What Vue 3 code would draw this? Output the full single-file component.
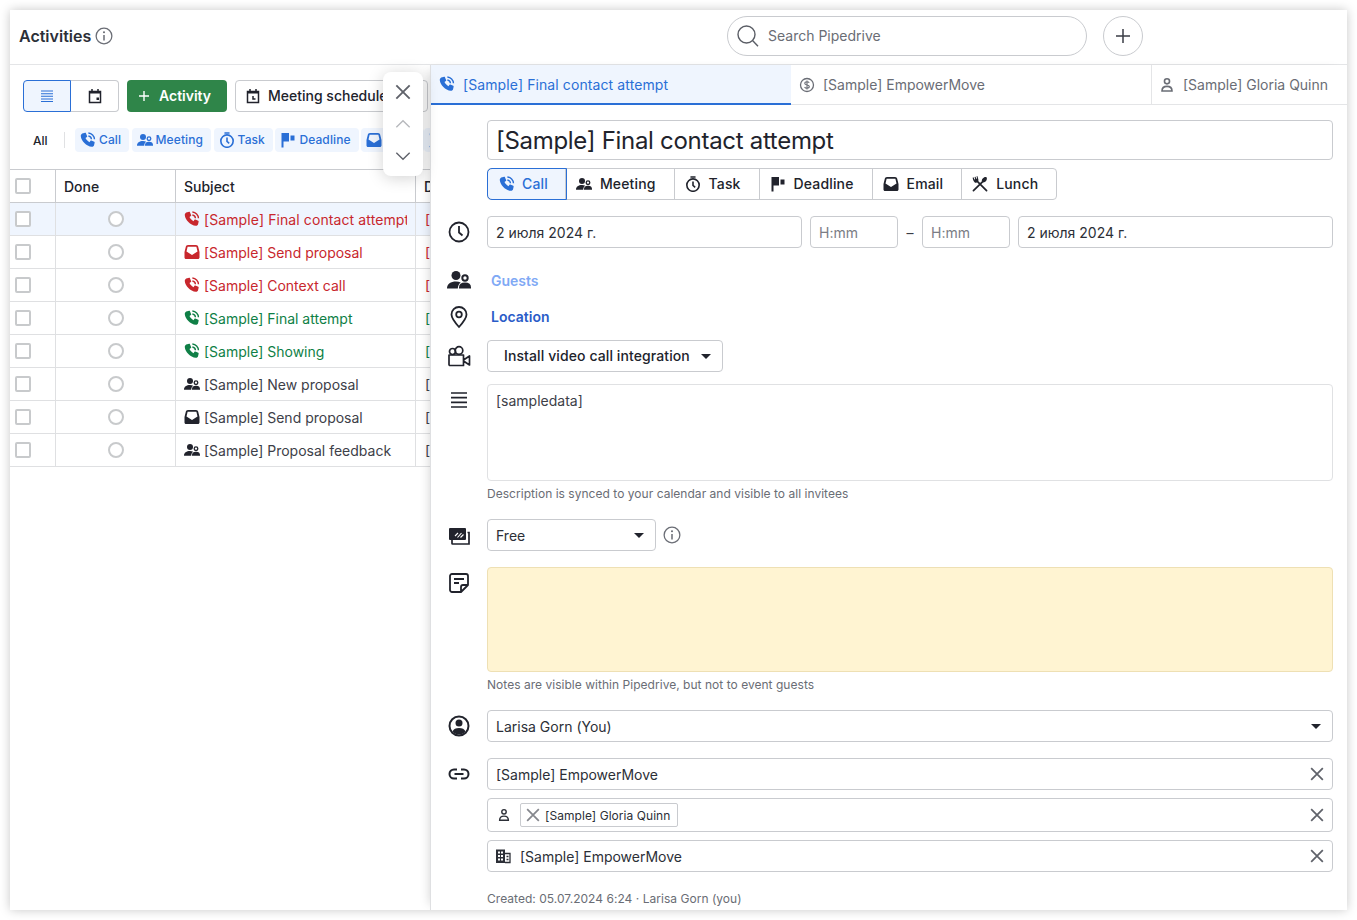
<script setup>
const rows = [
  { title: '[Sample] Final contact attempt', icon: 'i-call', tone: 'red', active: true },
  { title: '[Sample] Send proposal', icon: 'i-mail', tone: 'red' },
  { title: '[Sample] Context call', icon: 'i-call', tone: 'red' },
  { title: '[Sample] Final attempt', icon: 'i-call', tone: 'green' },
  { title: '[Sample] Showing', icon: 'i-call', tone: 'green' },
  { title: '[Sample] New proposal', icon: 'i-meet', tone: 'dark' },
  { title: '[Sample] Send proposal', icon: 'i-mail', tone: 'dark' },
  { title: '[Sample] Proposal feedback', icon: 'i-meet', tone: 'dark' },
];

const chips = [
  { label: 'Call', icon: 'i-call' },
  { label: 'Meeting', icon: 'i-meet' },
  { label: 'Task', icon: 'i-task' },
  { label: 'Deadline', icon: 'i-flag' },
  { label: 'Email', icon: 'i-mail' },
  { label: 'Lunch', icon: 'i-lunch' },
];
</script>

<template>
  <div class="page">
    <svg class="defs" width="0" height="0">
      <symbol id="i-call" viewBox="2 1.500 21 21">
        <path fill="currentColor" d="M6.200 3.200 8.700 2.600c.5-.1.900.1 1.100.6l1.600 3.800c.2.400.1.800-.3 1.100L9.200 9.400c1 2.100 2.900 4.200 5.200 5.400l1.400-1.800c.3-.4.700-.5 1.100-.3l3.800 1.700c.4.200.6.600.5 1.100l-.6 2.700c-.3 1.700-1.500 2.800-3.100 2.800C10.300 20.300 3.600 13.500 3 6.800 3 5 4.300 3.600 6.200 3.200Z"/>
        <path fill="none" stroke="currentColor" stroke-width="1.800" d="M13 2.800a8.600 8.600 0 0 1 8 8.200M13 6.800a4.600 4.600 0 0 1 4 4.200"/>
      </symbol>
      <symbol id="i-meet" viewBox="0 0 24 24">
        <circle cx="9" cy="7.500" r="4.500" fill="currentColor"/>
        <path fill="currentColor" d="M0 20.500c0-4.500 3.800-7 9-7 1.800 0 3.400.3 4.700 1-1.700 1.200-2.700 3.200-2.900 6Z"/>
        <circle cx="18" cy="10" r="2.700" fill="none" stroke="currentColor" stroke-width="2"/>
        <path fill="currentColor" stroke="currentColor" stroke-width="2" d="M13 19.500c0-2.600 2.200-4 5-4s5 1.400 5 4Z"/>
      </symbol>
      <symbol id="i-task" viewBox="1 1 22 22">
        <circle cx="12" cy="13.500" r="8.500" fill="none" stroke="currentColor" stroke-width="2.200"/>
        <path fill="none" stroke="currentColor" stroke-width="2.200" d="M8.500 2.300h7M12 8.500v5.500l3 2.500"/>
      </symbol>
      <symbol id="i-flag" viewBox="0 0 16 16">
        <path fill="currentColor" d="M1.500 1h7.500v8.500H3.500V15.500h-2Z"/>
        <rect x="10.500" y="3.500" width="4" height="5" fill="currentColor"/>
      </symbol>
      <symbol id="i-mail" viewBox="0 0 16 16">
        <path fill="currentColor" d="M4 1h8c1.200 0 2 .8 2.200 1.800L15.500 8v5.500c0 .9-.7 1.500-1.500 1.500H2c-.9 0-1.500-.6-1.500-1.500V8L1.800 2.800C2 1.800 2.800 1 4 1Zm0 1.800c-.2 0-.4.100-.5.400L2.500 7.500 8 11l5.500-3.500-1-4.300c-.1-.3-.3-.4-.5-.4Z"/>
      </symbol>
      <symbol id="i-lunch" viewBox="1 1 22 22">
        <path fill="none" stroke="currentColor" stroke-width="2.400" stroke-linecap="round" d="M3 21 15 9.500M21 21 8 8"/>
        <path fill="currentColor" d="M15 9.500c-1.500-3 .5-5.500 2.500-6.500 2-1 4-.5 4 1.500 0 3-3 6.500-6.500 5ZM2 3h1.500l.8 3 1-.8-.8-2.700 1.400-.5.900 2.800 1.200-.5-.8-2.800h1.400l1.200 4.500c.2 1.300-.3 2.300-1.300 3.200l-1 .8c-1 .6-2.200.4-3-.5C2.500 7.500 2 5 2 3Z"/>
      </symbol>
      <symbol id="i-x" viewBox="0 0 24 24">
        <path fill="none" stroke="currentColor" stroke-width="3" d="M2 2l20 20M22 2 2 22"/>
      </symbol>
      <symbol id="i-info" viewBox="0 0 24 24">
        <circle cx="12" cy="12" r="10.500" fill="none" stroke="currentColor" stroke-width="1.700"/>
        <path fill="none" stroke="currentColor" stroke-width="2" d="M12 10.500v7.500"/>
        <circle cx="12" cy="7" r="1.400" fill="currentColor"/>
      </symbol>
      <symbol id="i-person" viewBox="0 0 24 24">
        <circle cx="12" cy="6.500" r="3.800" fill="none" stroke="currentColor" stroke-width="2.400"/>
        <path fill="none" stroke="currentColor" stroke-width="2.400" d="M4.500 21c0-4.500 3-7 7.500-7s7.500 2.500 7.500 7Z"/>
      </symbol>
    </svg>

    <div class="shell">
      <header class="topbar">
        <div class="page-title">
          Activities
          <svg class="ico-18 grey"><use href="#i-info" /></svg>
        </div>
        <div class="search">
          <svg class="ico-24 search-ico" viewBox="0 0 24 24">
            <circle cx="10.500" cy="10.500" r="8.500" fill="none" stroke="currentColor" stroke-width="1.400" />
            <path fill="none" stroke="currentColor" stroke-width="1.400" d="m16.800 16.800 5.200 5.500" />
          </svg>
          <span class="lbl">Search Pipedrive</span>
        </div>
        <button class="add-btn">
          <svg class="ico-16" viewBox="0 0 16 16"><path fill="none" stroke="currentColor" stroke-width="1.500" d="M8 1v14M1 8h14" /></svg>
        </button>
      </header>

      <div class="body">
        <section class="list">
          <div class="toolbar">
            <div class="toggle">
              <button class="tog on">
                <svg class="ico-16" viewBox="0 0 16 16"><path fill="none" stroke="currentColor" stroke-width="1.100" d="M2 3h12M2 5.700h12M2 8.300h12M2 11h12M2 13.500h12" /></svg>
              </button>
              <button class="tog">
                <svg class="ico-16" viewBox="0 0 16 16">
                  <path fill="none" stroke="currentColor" stroke-width="1.500" d="M2.500 3.500h11v11h-11ZM5 1v3M11 1v3" />
                  <path fill="currentColor" d="M2.500 3.500h11v2h-11ZM9.500 9.500h2.500v2.500H9.500Z" />
                </svg>
              </button>
            </div>
            <button class="add-activity">
              <svg class="ico-12" viewBox="0 0 12 12"><path fill="none" stroke="currentColor" stroke-width="1.400" d="M6 1v10M1 6h10" /></svg>
              <span class="lbl">Activity</span>
            </button>
            <button class="scheduler">
              <svg class="ico-16" viewBox="0 0 16 16">
                <path fill="none" stroke="currentColor" stroke-width="1.500" d="M2.500 3.500h11v11h-11ZM5 1v3M11 1v3M8 8v3h2.500" />
                <path fill="currentColor" d="M2.500 3.500h11v2h-11Z" />
              </svg>
              <span class="lbl">Meeting scheduler</span>
            </button>
          </div>

          <div class="filters">
            <span class="all">All</span>
            <span class="sep"></span>
            <span v-for="c in chips" :key="c.label" class="chip">
              <svg class="ico-16"><use :href="'#' + c.icon" /></svg>
              <span class="lbl-s">{{ c.label }}</span>
            </span>
          </div>

          <div class="row head">
            <div class="cell c-check"><span class="check"></span></div>
            <div class="cell c-done">Done</div>
            <div class="cell c-subject">Subject</div>
            <div class="cell c-rest">Deal</div>
          </div>
          <div v-for="(r, i) in rows" :key="i" class="row" :class="[r.tone, { active: r.active }]">
            <div class="cell c-check"><span class="check"></span></div>
            <div class="cell c-done center"><span class="radio"></span></div>
            <div class="cell c-subject">
              <svg class="ico-16 row-ico"><use :href="'#' + r.icon" /></svg>
              <span class="subject-text">{{ r.title }}</span>
            </div>
            <div class="cell c-rest">[Sample]</div>
          </div>
        </section>

        <section class="detail">
          <nav class="tabs">
            <div class="tab tab-1 current">
              <svg class="ico-16"><use href="#i-call" /></svg>
              [Sample] Final contact attempt
            </div>
            <div class="tab tab-2">
              <svg class="ico-16" viewBox="0 0 16 16">
                <circle cx="8" cy="8" r="6.500" fill="none" stroke="currentColor" stroke-width="1.300" />
                <path fill="none" stroke="currentColor" stroke-width="1.100" d="M10.200 5.800C9.800 5 9 4.700 8 4.700c-1.200 0-2.200.6-2.200 1.700 0 2.300 4.500 1 4.500 3.200 0 1.100-1 1.700-2.300 1.700-1.100 0-2-.4-2.400-1.200M8 3.500v9" />
              </svg>
              [Sample] EmpowerMove
            </div>
            <div class="tab tab-3">
              <svg class="ico-16"><use href="#i-person" /></svg>
              [Sample] Gloria Quinn
            </div>
          </nav>

          <form class="form" @submit.prevent>
            <div class="line">
              <div class="field title-field">[Sample] Final contact attempt</div>
            </div>

            <div class="line types-line">
              <div class="types">
                <button v-for="(c, i) in chips" :key="c.label" class="type" :class="{ picked: i === 0 }">
                  <svg class="ico-16"><use :href="'#' + c.icon" /></svg>
                  <span class="lbl">{{ c.label }}</span>
                </button>
              </div>
            </div>

            <div class="line dates">
              <svg class="side ico-24" viewBox="0 0 24 24">
                <circle cx="12" cy="12" r="9.500" fill="none" stroke="currentColor" stroke-width="1.800" />
                <path fill="none" stroke="currentColor" stroke-width="1.800" d="M12 6v6.500l3.500 3" />
              </svg>
              <div class="field grow">2 июля 2024 г.</div>
              <div class="field time">H:mm</div>
              <span class="dash">–</span>
              <div class="field time">H:mm</div>
              <div class="field grow">2 июля 2024 г.</div>
            </div>

            <div class="line link-line guests">
              <svg class="side ico-24"><use href="#i-meet" /></svg>
              <a class="pale">Guests</a>
            </div>

            <div class="line link-line location">
              <svg class="side ico-24" viewBox="0 0 24 24">
                <path fill="none" stroke="currentColor" stroke-width="1.800" d="M12 22C7.500 17 4.500 13.500 4.500 9.500a7.500 7.500 0 0 1 15 0C19.500 13.500 16.500 17 12 22Z" />
                <circle cx="12" cy="9.500" r="2.800" fill="none" stroke="currentColor" stroke-width="1.800" />
              </svg>
              <a>Location</a>
            </div>

            <div class="line video">
              <svg class="side ico-24" viewBox="0 0 24 24">
                <circle cx="5.500" cy="7.500" r="3" fill="none" stroke="currentColor" stroke-width="1.700" />
                <circle cx="12" cy="6.500" r="3.800" fill="none" stroke="currentColor" stroke-width="1.700" />
                <path fill="none" stroke="currentColor" stroke-width="1.700" stroke-linejoin="round" d="M2 11h14.500v10.500H3a1 1 0 0 1-1-1ZM16.500 16l6-4v9l-6-4" />
              </svg>
              <button class="video-btn">
                <span class="lbl">Install video call integration</span>
                <span class="caret"></span>
              </button>
            </div>

            <div class="line desc">
              <svg class="side ico-24" viewBox="0 0 24 24"><path fill="none" stroke="currentColor" stroke-width="1.700" d="M4 5h16M4 9.700h16M4 14.300h16M4 19h16" /></svg>
              <div class="area">[sampledata]</div>
            </div>
            <p class="hint hint-desc">Description is synced to your calendar and visible to all invitees</p>

            <div class="line busy">
              <svg class="side ico-24" viewBox="0 0 24 24">
                <path fill="none" stroke="currentColor" stroke-width="1.700" d="M5 9v11.500a.5.500 0 0 0 .5.500H22V9.500h-1.500" />
                <rect x="2" y="5" width="17" height="12" rx="1" fill="currentColor" />
                <path fill="none" stroke="#fff" stroke-width="1.100" d="m8 13 3-3M10.500 14.500l4-4.500M13.500 14.500l3-3" />
              </svg>
              <div class="field select free">Free<span class="caret"></span></div>
              <svg class="ico-18 grey free-info"><use href="#i-info" /></svg>
            </div>

            <div class="line note">
              <svg class="side ico-24" viewBox="0 0 24 24">
                <path fill="none" stroke="currentColor" stroke-width="1.800" stroke-linejoin="round" d="M14 21H5a2 2 0 0 1-2-2V5a2 2 0 0 1 2-2h14a2 2 0 0 1 2 2v9Zm0 0v-5a2 2 0 0 1 2-2h5M7 8h10M7 12h5" />
              </svg>
              <div class="note-box"></div>
            </div>
            <p class="hint hint-note">Notes are visible within Pipedrive, but not to event guests</p>

            <div class="line owner">
              <svg class="side ico-24" viewBox="0 0 24 24">
                <circle cx="12" cy="12" r="9.500" fill="none" stroke="currentColor" stroke-width="2" />
                <circle cx="12" cy="9" r="3.500" fill="currentColor" />
                <path fill="currentColor" d="M5.500 17.500c.8-2.500 3.500-3.500 6.500-3.500s5.700 1 6.500 3.500c-1.500 2-4 3-6.500 3s-5-1-6.500-3Z" />
              </svg>
              <div class="field select">Larisa Gorn (You)<span class="caret"></span></div>
            </div>

            <div class="line linked">
              <svg class="side ico-24" viewBox="0 0 24 24">
                <path fill="none" stroke="currentColor" stroke-width="2" d="M10 7.500H7a4.500 4.500 0 0 0 0 9h3M14 7.500h3a4.500 4.500 0 0 1 0 9h-3M7.500 12h9" />
              </svg>
              <div class="field clearable">
                [Sample] EmpowerMove
                <svg class="ico-14 clear"><use href="#i-x" /></svg>
              </div>
            </div>
            <div class="line linked-person">
              <div class="field clearable person">
                <svg class="ico-14"><use href="#i-person" /></svg>
                <span class="tag">
                  <svg class="ico-14"><use href="#i-x" /></svg>
                  [Sample] Gloria Quinn
                </span>
                <svg class="ico-14 clear"><use href="#i-x" /></svg>
              </div>
            </div>
            <div class="line linked-org">
              <div class="field clearable org">
                <svg class="ico-16" viewBox="0 0 16 16">
                  <path fill="currentColor" fill-rule="evenodd" d="M1 1.500h9V15H1Zm2 2v2h2v-2Zm3 0v2h2v-2Zm-3 3.500v2h2V7Zm3 0v2h2V7Zm-3 3.500v2h2v-2Zm3 0v2h2v-2Z" />
                  <path fill="none" stroke="currentColor" stroke-width="1.300" d="M10 5.500h5v9h-5M11.500 8.500h2M11.500 11.500h2" />
                </svg>
                [Sample] EmpowerMove
                <svg class="ico-14 clear"><use href="#i-x" /></svg>
              </div>
            </div>

            <p class="hint created">Created: 05.07.2024 6:24 · Larisa Gorn (you)</p>
          </form>
        </section>
      </div>

      <aside class="pager">
        <svg class="pager-x" viewBox="0 0 24 24"><path fill="none" stroke="currentColor" stroke-width="2.200" d="M4 4l16 16M20 4 4 20" /></svg>
        <svg class="pager-up" viewBox="0 0 24 24"><path fill="none" stroke="currentColor" stroke-width="1.600" d="m4 16 8-8 8 8" /></svg>
        <svg class="pager-down" viewBox="0 0 24 24"><path fill="none" stroke="currentColor" stroke-width="1.600" d="m4 8 8 8 8-8" /></svg>
      </aside>
    </div>
  </div>
</template>

<style scoped>
.page {
  width: 1357px;
  height: 920px;
  padding: 10px;
  box-sizing: border-box;
  overflow: hidden;
  background: #fff;
  font-family: Inter, "Noto Sans", sans-serif;
  font-size: 14px;
  color: #21232c;
}
.defs { position: absolute; }
button { font-family: inherit; background: #fff; cursor: pointer; padding: 0; }
svg { flex: none; display: block; }
.ico-12 { width: 12px; height: 12px; }
.ico-14 { width: 14px; height: 14px; }
.ico-16 { width: 16px; height: 16px; }
.ico-18 { width: 18px; height: 18px; }
.ico-24 { width: 24px; height: 24px; }
.grey { color: #6a6d75; }
.lbl { margin-bottom: 2px; }
.lbl-s { margin-bottom: 2px; letter-spacing: 0.1px; }

.shell {
  position: relative;
  width: 1337px;
  height: 900px;
  display: flex;
  flex-direction: column;
  background: #fff;
  box-shadow: 0 0 10px rgba(0, 0, 0, 0.22);
  overflow: hidden;
}

.topbar {
  height: 55px;
  flex: none;
  display: flex;
  align-items: center;
  padding-bottom: 2px;
  border-bottom: 1px solid #e4e5e7;
  box-sizing: border-box;
}
.page-title {
  width: 717px;
  padding-left: 9px;
  box-sizing: border-box;
  display: flex;
  align-items: center;
  gap: 4px;
  font-size: 16px;
  font-weight: 600;
  color: #2c2f37;
}
.search {
  width: 360px;
  height: 40px;
  box-sizing: border-box;
  border: 1px solid #c9cbcf;
  border-radius: 20px;
  display: flex;
  align-items: center;
  gap: 8px;
  padding-left: 8px;
  color: #6a6d75;
}
.search-ico { color: #5a5d65; }
.add-btn {
  margin-left: 16px;
  width: 40px;
  height: 40px;
  border: 1px solid #c9cbcf;
  border-radius: 50%;
  display: flex;
  align-items: center;
  justify-content: center;
  color: #3a3d45;
}

.body { flex: 1; display: flex; min-height: 0; }

.list {
  width: 420px;
  flex: none;
  overflow: hidden;
}
.toolbar {
  display: flex;
  gap: 8px;
  padding: 15px 0 0 13px;
  width: 500px;
}
.toggle { display: flex; }
.tog {
  width: 48px;
  height: 32px;
  border: 1px solid #c9cbcf;
  border-left: 0;
  border-radius: 0 4px 4px 0;
  display: flex;
  align-items: center;
  justify-content: center;
  color: #21232c;
}
.tog.on {
  border: 1px solid #2a6fd6;
  border-radius: 4px 0 0 4px;
  background: #eff5fe;
  color: #2a6fd6;
}
.add-activity {
  width: 100px;
  height: 32px;
  border: 0;
  border-radius: 4px;
  background: #2f8549;
  color: #fff;
  font-size: 14px;
  font-weight: 600;
  display: flex;
  align-items: center;
  gap: 9px;
  padding-left: 11px;
}
.scheduler {
  width: 193px;
  height: 32px;
  box-sizing: border-box;
  border: 1px solid #c9cbcf;
  border-radius: 4px;
  font-size: 14px;
  font-weight: 500;
  color: #21232c;
  display: flex;
  align-items: center;
  gap: 7px;
  padding-left: 9px;
  white-space: nowrap;
  overflow: hidden;
}

.filters {
  display: flex;
  align-items: center;
  height: 24px;
  margin-top: 16px;
  margin-bottom: 17px;
  padding-left: 23px;
  white-space: nowrap;
  width: 500px;
}
.all { font-size: 12px; font-weight: 500; width: 31px; flex: none; }
.sep { width: 1px; height: 16px; background: #e0e1e3; margin-right: 10px; flex: none; }
.chip {
  height: 24px;
  display: flex;
  align-items: center;
  gap: 3px;
  padding: 0 8px 0 5px;
  margin-right: 2.5px;
  border-radius: 4px;
  background: #eff5fe;
  color: #2a6fd6;
  font-size: 12px;
  font-weight: 500;
  flex: none;
}
.chip:last-child { margin-left: -3px; }

.row {
  display: flex;
  height: 33px;
  box-sizing: border-box;
  border-bottom: 1px solid #dfe0e2;
  width: 500px;
  white-space: nowrap;
}
.row.head {
  border-top: 1px solid #c9cbcf;
  border-bottom: 1px solid #c9cbcf;
  font-weight: 500;
  color: #21232c;
  height: 34px;
}
.cell {
  display: flex;
  align-items: center;
  border-right: 1px solid #dfe0e2;
  box-sizing: border-box;
  overflow: hidden;
}
.row.head .cell { border-right-color: #c9cbcf; }
.c-check { width: 46px; padding-left: 5px; }
.c-done { width: 120px; padding-left: 8px; }
.c-done.center { justify-content: center; padding: 0; }
.c-subject { width: 240px; padding-left: 8px; gap: 4px; }
.c-rest { flex: 1; padding-left: 9px; border-right: 0; }
.row.head .c-rest { padding-left: 8px; }
.subject-text { overflow: hidden; width: 203px; flex: none; }
.row.active .subject-text { letter-spacing: 0.1px; }
.check {
  width: 16px;
  height: 16px;
  box-sizing: border-box;
  border: 2px solid #c8cacc;
  border-radius: 2px;
  background: #fff;
}
.radio {
  width: 16px;
  height: 16px;
  box-sizing: border-box;
  border: 2px solid #c8cacc;
  border-radius: 50%;
  background: #fff;
}
.row.active { background: #eff5fe; }
.row.red { color: #c8272d; }
.row.green { color: #0f7f46; }
.row.dark { color: #3d4048; }
.row.dark .row-ico { color: #21232c; }

.detail {
  flex: 1;
  min-width: 0;
  position: relative;
  z-index: 1;
  background: #fff;
  border-left: 1px solid #dfe0e2;
  box-shadow: -6px 0 10px -6px rgba(0, 0, 0, 0.18);
}
.tabs {
  display: flex;
  height: 40px;
  border-bottom: 1px solid #e4e5e7;
  box-sizing: border-box;
  color: #6a6d75;
}
.tab {
  display: flex;
  align-items: center;
  gap: 8px;
  padding-left: 8px;
  box-sizing: border-box;
  border-right: 1px solid #e4e5e7;
}
.tab-1 { width: 360px; letter-spacing: 0.1px; }
.tab-2 { width: 361px; }
.tab-3 { flex: 1; border-right: 0; padding-left: 7px; }
.tab.current {
  background: #eff5fe;
  color: #2a6fd6;
  border-right: 0;
  border-bottom: 2px solid #2a6fd6;
  height: 40px;
}

.form {
  padding: 15px 14px 0 56px;
  position: relative;
}
.line {
  display: flex;
  align-items: center;
  gap: 8px;
  position: relative;
}
.side {
  position: absolute;
  left: -40px;
  top: 50%;
  transform: translateY(-50%);
  color: #21232c;
}
.field {
  height: 32px;
  box-sizing: border-box;
  border: 1px solid #c9cbcf;
  border-radius: 4px;
  display: flex;
  align-items: center;
  padding: 0 8px;
  color: #2c2f37;
  position: relative;
}
.title-field {
  flex: 1;
  height: 40px;
  font-size: 24px;
  letter-spacing: -0.3px;
  color: #21232c;
}
.types-line { margin-top: 8px; }
.types {
  display: flex;
  height: 32px;
  border: 1px solid #c9cbcf;
  border-radius: 4px;
  box-sizing: border-box;
}
.type {
  border: 0;
  border-right: 1px solid #c9cbcf;
  background: transparent;
  height: 30px;
  padding: 0 18px 0 10px;
  display: flex;
  align-items: center;
  gap: 8px;
  font-size: 14px;
  font-weight: 500;
  letter-spacing: 0.15px;
  color: #21232c;
}
.type:last-child { border-right: 0; }
.type.picked {
  outline: 1px solid #2a6fd6;
  border-radius: 4px 0 0 4px;
  background: #eff5fe;
  color: #2a6fd6;
  padding: 0 17px 0 11px;
  gap: 7px;
}
.dates { margin-top: 16px; }
.grow { width: 315px; }
.time { width: 88px; color: #7a7d85; }
.dash { width: 8px; text-align: center; color: #3a3d45; }
.link-line { height: 24px; }
.link-line a { color: #2a5cc8; font-weight: 600; padding-left: 4px; }
.link-line a.pale { color: #7fa9f5; }
.guests { margin-top: 20px; }
.location { margin-top: 13px; }
.location a { padding-bottom: 2px; }
.video { margin-top: 11px; }
.video-btn {
  width: 236px;
  height: 32px;
  border: 1px solid #c9cbcf;
  border-radius: 4px;
  font-size: 14px;
  font-weight: 500;
  letter-spacing: 0.1px;
  color: #21232c;
  display: flex;
  align-items: center;
  justify-content: space-between;
  padding: 0 11px 0 16px;
}
.caret {
  width: 0;
  height: 0;
  border-left: 5px solid transparent;
  border-right: 5px solid transparent;
  border-top: 5px solid #21232c;
}
.select { justify-content: space-between; padding-right: 11px; flex: 1; }
.desc { margin-top: 12px; }
.desc .side { top: 4px; transform: none; }
.area {
  flex: 1;
  height: 97px;
  box-sizing: border-box;
  border: 1px solid #e0e1e3;
  border-radius: 4px;
  padding: 7px 8px;
  color: #3d4048;
  font-size: 14px;
  line-height: 17px;
}
.hint {
  margin: 0;
  font-size: 12px;
  line-height: 14px;
  letter-spacing: 0.03px;
  color: #6a6d75;
}
.hint-desc { margin-top: 6px; }
.busy { margin-top: 18px; }
.free { flex: none; width: 169px; }
.free-info { margin-left: -1px; }
.note { margin-top: 16px; }
.note .side { top: 4px; transform: none; }
.note-box {
  flex: 1;
  height: 105px;
  box-sizing: border-box;
  background: #fff4d2;
  border: 1px solid #eee0b4;
  border-radius: 4px;
}
.hint-note { margin-top: 6px; }
.owner { margin-top: 18px; }
.linked { margin-top: 16px; }
.linked-person { margin-top: 8px; }
.linked-org { margin-top: 8px; }
.clearable { flex: 1; }
.person { height: 34px; padding-left: 9px; gap: 9px; }
.org { gap: 9px; padding-left: 7px; }
.clear { position: absolute; right: 8px; top: 50%; transform: translateY(-50%); color: #5f626a; }
.tag {
  display: flex;
  align-items: center;
  gap: 5px;
  height: 24px;
  border: 1px solid #c9cbcf;
  border-radius: 2px;
  box-sizing: border-box;
  padding: 0 7px 0 5px;
  font-size: 12px;
  letter-spacing: 0.05px;
}
.tag svg { color: #85878d; }
.created { margin-top: 20px; }

.pager {
  position: absolute;
  left: 373px;
  top: 62px;
  width: 40px;
  height: 104px;
  background: #fff;
  border-radius: 8px;
  box-shadow: 0 2px 16px rgba(0, 0, 0, 0.18);
  z-index: 2;
  display: flex;
  flex-direction: column;
  align-items: center;
}
.pager-x { width: 20px; height: 20px; margin-top: 10px; color: #5f626a; }
.pager-up { width: 20px; height: 20px; margin-top: 12px; color: #b6b8bc; }
.pager-down { width: 20px; height: 20px; margin-top: 12px; color: #5f626a; }
</style>

<style>
html, body { margin: 0; background: #fff; }
</style>
